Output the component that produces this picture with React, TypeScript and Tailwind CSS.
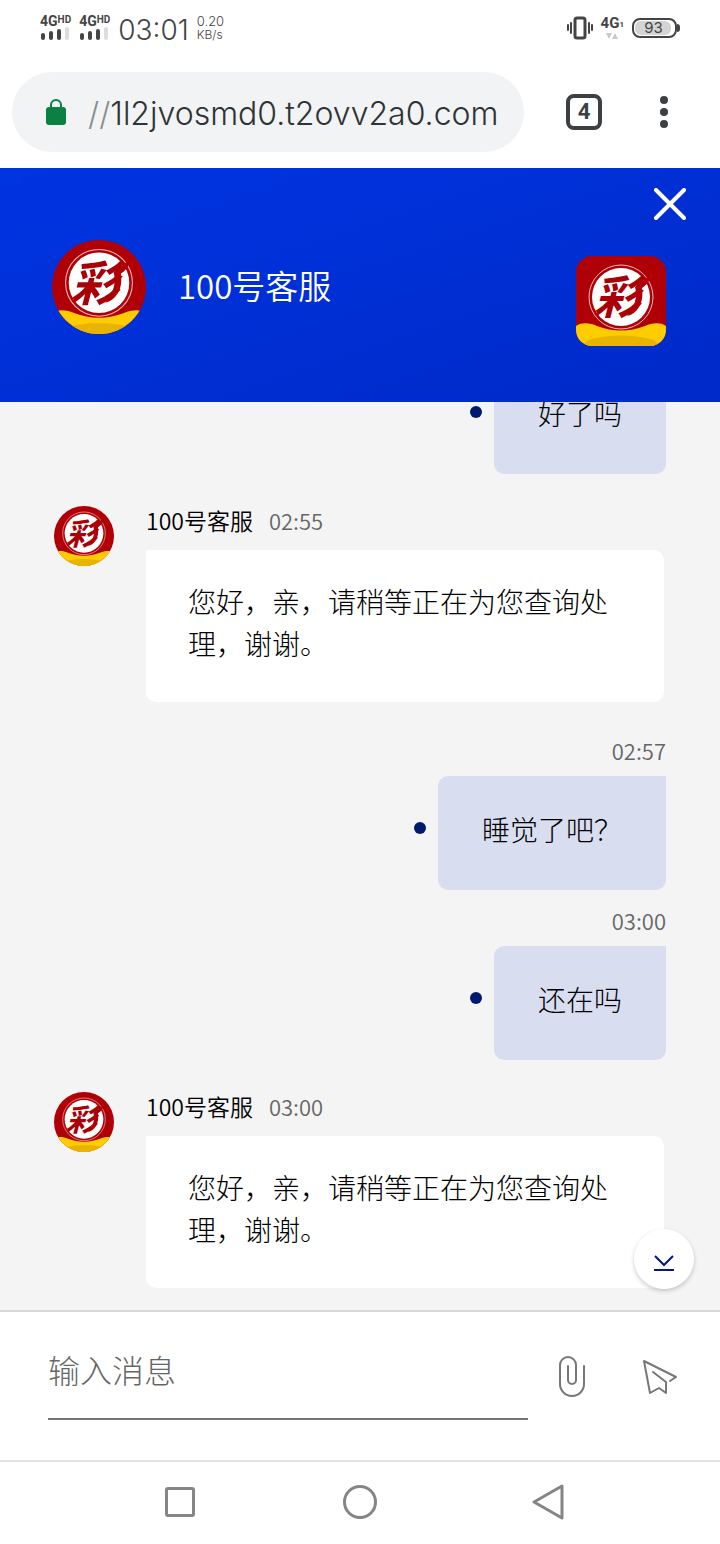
import { Fragment } from "react";

interface Message {
  id: number;
  from: "agent" | "me";
  time: string;
  text: string;
}

const AGENT_NAME = "100号客服";

const messages: Message[] = [
  { id: 1, from: "me", time: "02:54", text: "好了吗" },
  { id: 2, from: "agent", time: "02:55", text: "您好，亲，请稍等正在为您查询处理，谢谢。" },
  { id: 3, from: "me", time: "02:57", text: "睡觉了吧？" },
  { id: 4, from: "me", time: "03:00", text: "还在吗" },
  { id: 5, from: "agent", time: "03:00", text: "您好，亲，请稍等正在为您查询处理，谢谢。" },
];

function Logo({ className }: { className: string }) {
  return (
    <svg viewBox="0 0 90 90" className={className} role="img" aria-label={AGENT_NAME}>
      <rect width="90" height="90" fill="#b00007" />
      <circle cx="45" cy="41" r="32" fill="none" stroke="#f3b9b5" strokeWidth="1" />
      <circle cx="45" cy="41" r="29" fill="#fff" />
      <text
        x="41"
        y="58"
        textAnchor="middle"
        fontSize="46"
        fill="#a80006"
        className="font-['Noto_Sans_CJK_SC',sans-serif] font-bold italic"
      >
        彩
      </text>
      <path
        d="M75 15c0 8-3 13-9 17 1 8 0 14-3 19-3 5-7 8-12 9 6-7 8-12 9-20 0-4 0-5-1-9 6-6 13-8 16-16z"
        fill="#b00007"
      />
      <path d="M0 70c6-4 14-3 21 0 16 6 32 6 48 0 7-3 15-4 21 0v20H0z" fill="#fc0" />
      <path d="M12 84c20-6 46-6 66 0l6 6H6z" fill="#e8b400" />
    </svg>
  );
}

function Signal() {
  return (
    <div className="flex flex-col gap-px">
      <div className="flex items-start font-[Roboto,sans-serif] font-bold">
        <span className="text-[14px] leading-[10px]">4G</span>
        <span className="text-[10px] leading-[7px]">HD</span>
      </div>
      <div className="flex items-end gap-1 pl-px">
        <span className="h-[7px] w-1 rounded-sm bg-[#444]" />
        <span className="h-[9px] w-1 rounded-sm bg-[#444]" />
        <span className="h-[11px] w-1 rounded-sm bg-[#444]" />
        <span className="h-[13px] w-1 rounded-sm bg-[#ddd]" />
      </div>
    </div>
  );
}

function StatusBar() {
  return (
    <div className="flex h-14 shrink-0 items-center justify-between pl-10 pr-10 font-[Inter,sans-serif] text-[#444]">
      <div className="flex items-center gap-2">
        <Signal />
        <Signal />
        <span className="pt-1 text-[28px] font-light leading-8">03:01</span>
        <div className="flex flex-col text-[13px] font-light leading-[13px]">
          <span>0.20</span>
          <span className="text-[12px]">KB/s</span>
        </div>
      </div>
      <div className="flex items-center gap-2">
        <svg viewBox="0 0 26 24" className="h-6 w-[26px]" fill="none" stroke="#444" strokeLinecap="round">
          <rect x="8" y="2" width="10" height="20" rx="2" strokeWidth="3" />
          <path d="M4 7v10M22 7v10M1 9v5M25 9v5" strokeWidth="2" />
        </svg>
        <div className="flex flex-col gap-1">
          <div className="flex items-end font-[Roboto,sans-serif] font-bold">
            <span className="text-[15px] leading-3">4G</span>
            <span className="text-[8px] leading-2">1</span>
          </div>
          <svg viewBox="0 0 22 6" className="h-[6px] w-[22px]" fill="#c8c8c8">
            <path d="M5 0h6l-3 6zM11 6h6l-3-6z" />
          </svg>
        </div>
        <div className="flex items-center">
          <div className="flex h-5 w-[45px] rounded-lg border-2 border-[#444] p-px">
            <span className="w-[36px] rounded-md bg-[#d4d4d4] pl-px text-center text-[15px] leading-[14px]">93</span>
          </div>
          <span className="h-2 w-[3px] rounded-r bg-[#444]" />
        </div>
      </div>
    </div>
  );
}

function BrowserBar() {
  return (
    <div className="flex h-28 shrink-0 items-center pl-3 pr-[46px] font-[Inter,sans-serif]">
      <div className="flex h-20 min-w-0 flex-1 items-center rounded-full bg-[#f1f3f4] pl-[34px]">
        <svg viewBox="0 0 20 26" className="mr-[22px] h-[26px] w-5 shrink-0">
          <rect y="8" width="20" height="18" rx="3" fill="#0b8043" />
          <path d="M5 9V6a5 5 0 0 1 10 0v3" fill="none" stroke="#0b8043" strokeWidth="2" />
        </svg>
        <span className="whitespace-nowrap pt-1 text-[32px] font-light leading-10 text-[#303336]">
          <span className="text-[#8a8d90]">//</span>1l2jvosmd0.t2ovv2a0.com
        </span>
      </div>
      <button
        aria-label="Tabs"
        className="ml-[42px] flex size-9 shrink-0 items-center justify-center rounded-lg border-4 border-[#3c4043] font-[Roboto,sans-serif] text-[22px] font-bold leading-none text-[#3c4043]"
      >
        4
      </button>
      <button aria-label="Menu" className="ml-[52px] flex w-5 shrink-0 flex-col items-center gap-1">
        <span className="size-2 rounded-full bg-[#3c4043]" />
        <span className="size-2 rounded-full bg-[#3c4043]" />
        <span className="size-2 rounded-full bg-[#3c4043]" />
      </button>
    </div>
  );
}

function ChatHeader() {
  return (
    <header className="relative flex h-[234px] shrink-0 items-center bg-linear-to-br from-[#0034e2] to-[#002ac8] pl-[52px] pr-[54px]">
      <Logo className="mt-1 size-[94px] rounded-full" />
      <h1 className="ml-8 flex-1 text-[33px] font-[350] leading-10 text-white">{AGENT_NAME}</h1>
      <Logo className="mt-8 size-[90px] rounded-2xl" />
      <button aria-label="Close" className="absolute right-[34px] top-5">
        <svg viewBox="0 0 32 32" className="size-8" fill="none" stroke="#fff" strokeWidth="4" strokeLinecap="round">
          <path d="M2 2l28 28M30 2L2 30" />
        </svg>
      </button>
    </header>
  );
}

function AgentMessage({ message }: { message: Message }) {
  return (
    <div className="mb-[18px] mt-8 flex shrink-0 items-start gap-8 pl-[54px] pr-14">
      <Logo className="size-[60px] shrink-0 rounded-full" />
      <div className="min-w-0 flex-1">
        <div className="flex gap-4 text-[23px] font-[350] leading-7">
          <span>{AGENT_NAME}</span>
          <time className="text-[22px] text-[#666]">{message.time}</time>
        </div>
        <p className="mt-4 rounded-b-[10px] rounded-tr-[10px] bg-white px-[42px] pb-[38px] pt-[30px] text-[28px] font-light leading-[42px]">
          {message.text}
        </p>
      </div>
    </div>
  );
}

function MyMessage({ message }: { message: Message }) {
  return (
    <div className="mt-4 flex shrink-0 flex-col items-end pr-[54px]">
      <time className="text-[22px] font-[350] leading-7 text-[#666]">{message.time}</time>
      <div className="mt-3 flex gap-3">
        <span className="mt-[46px] size-3 shrink-0 rounded-full bg-[#001a70]" />
        <p className="rounded-b-[10px] rounded-tl-[10px] bg-[#d8ddef] px-11 pb-10 pt-8 text-[28px] font-light leading-[42px]">
          {message.text}
        </p>
      </div>
    </div>
  );
}

function Composer() {
  return (
    <form className="flex shrink-0 items-center border-t-2 border-[#d8d8d8] bg-white pb-10 pl-12 pr-10 pt-[22px]">
      <input
        type="text"
        aria-label="输入消息"
        placeholder="输入消息"
        className="mr-6 h-[86px] min-w-0 flex-1 border-b-2 border-[#757575] pb-[14px] text-[32px] font-light outline-none placeholder:text-[#666]"
      />
      <button type="button" aria-label="Attach" className="mr-12 flex w-10 justify-center">
        <svg viewBox="0 0 28 42" className="h-[42px] w-7" fill="none" stroke="#777" strokeWidth="2" strokeLinecap="round">
          <path d="M26 10v18a12 12 0 0 1-24 0V9a8 8 0 0 1 16 0v15a4 4 0 0 1-8 0V10" />
        </svg>
      </button>
      <button type="submit" aria-label="Send" className="flex w-10 justify-center">
        <svg viewBox="0 0 36 36" className="size-9" fill="none" stroke="#777" strokeWidth="2" strokeLinecap="round" strokeLinejoin="round">
          <path d="M28 22l6-4L2 2l6 32 9-5 7 5V23L11 13" />
        </svg>
      </button>
    </form>
  );
}

function NavBar() {
  return (
    <nav className="flex h-[84px] shrink-0 items-center justify-center gap-[140px] border-t-2 border-[#e2e2e2] bg-white pb-[2px] pl-4">
      <button aria-label="Recent apps" className="flex w-8 justify-center">
        <span className="size-[30px] rounded-[3px] border-[3px] border-[#858585]" />
      </button>
      <button aria-label="Home" className="flex w-12 justify-center">
        <span className="size-[34px] rounded-full border-[3px] border-[#858585]" />
      </button>
      <button aria-label="Back" className="flex w-12 justify-center">
        <svg viewBox="0 0 36 36" className="size-9" fill="none" stroke="#858585" strokeWidth="3" strokeLinejoin="round">
          <path d="M32 2v32L4 18z" />
        </svg>
      </button>
    </nav>
  );
}

export default function App() {
  return (
    <div className="flex h-screen flex-col bg-white font-['Noto_Sans_CJK_SC',sans-serif] text-black">
      <StatusBar />
      <BrowserBar />
      <ChatHeader />
      <main className="relative flex min-h-0 flex-1 flex-col justify-end overflow-hidden bg-[#f4f4f4] pb-1">
        {messages.map((message) => (
          <Fragment key={message.id}>
            {message.from === "me" ? <MyMessage message={message} /> : <AgentMessage message={message} />}
          </Fragment>
        ))}
        <button
          aria-label="Scroll to latest"
          className="absolute bottom-[21px] right-[26px] flex size-[60px] items-center justify-center rounded-full bg-white pt-2 shadow-[0_2px_4px_rgba(0,0,0,0.2)]"
        >
          <svg viewBox="0 0 20 16" className="h-4 w-5" fill="none" stroke="#001a70" strokeWidth="2">
            <path d="M1 1l9 9 9-9M0 15h20" />
          </svg>
        </button>
      </main>
      <Composer />
      <NavBar />
    </div>
  );
}
